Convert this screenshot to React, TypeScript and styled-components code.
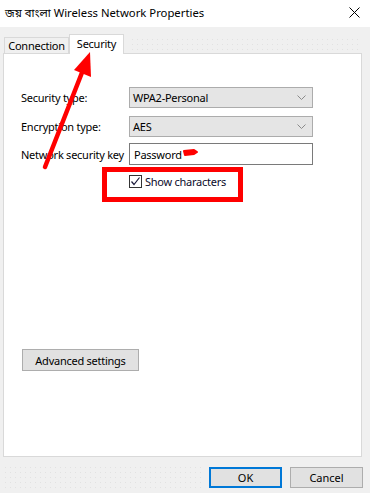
import React from 'react';
import styled, { createGlobalStyle } from 'styled-components';

const Global = createGlobalStyle`
  html, body { margin: 0; padding: 0; background: #f0f0f0; }
  body {
    font-family: "Noto Sans", "Noto Sans Bengali", sans-serif;
    font-size: 11px;
    line-height: 15px;
    color: #000;
  }
`;

const Window = styled.div`
  position: relative;
  width: 370px;
  height: 493px;
  background: #f0f0f0;
  display: flex;
  flex-direction: column;
  overflow: hidden;
`;

const TitleBar = styled.div`
  height: 27px;
  box-sizing: border-box;
  background: #fff;
  display: flex;
  align-items: center;
  justify-content: space-between;
  padding: 0 10px 2px 5px;
`;

const Title = styled.span`
  font-size: 11.3px;
  white-space: nowrap;
`;

const Body = styled.div`
  display: flex;
  flex-direction: column;
  padding: 7px 8px 0 3px;
  letter-spacing: -0.25px;
`;

const TabStrip = styled.div`
  display: flex;
  align-items: flex-end;
  height: 19px;
  padding-left: 1px;
`;

const Tab = styled.div<{ $active?: boolean }>`
  box-sizing: border-box;
  width: ${p => (p.$active ? '55px' : '65px')};
  height: ${p => (p.$active ? '20px' : '16px')};
  margin-bottom: ${p => (p.$active ? '-1px' : '0')};
  padding: ${p => (p.$active ? '1px 0 0' : '0')};
  background: ${p => (p.$active ? '#fff' : '#f0f0f0')};
  border: 1px solid #d9d9d9;
  border-bottom: none;
  position: relative;
  z-index: ${p => (p.$active ? 2 : 1)};
  display: flex;
  justify-content: center;
  align-items: ${p => (p.$active ? 'flex-start' : 'center')};
  white-space: nowrap;
`;

const Dots = styled.div<{ $h: number }>`
  flex: 1;
  height: ${p => p.$h}px;
  background-image: radial-gradient(circle, #e2e2e2 0.6px, transparent 0.8px);
  background-size: 5px 5px;
`;

const TabDots = styled(Dots)`
  margin: 0 0 3px 6px;
  align-self: flex-end;
`;

const Panel = styled.div`
  position: relative;
  z-index: 1;
  box-sizing: border-box;
  height: 404px;
  background: #fff;
  border: 1px solid #d9d9d9;
  padding: 33px 0 0 17px;
  display: flex;
  flex-direction: column;
`;

const Form = styled.div`
  display: grid;
  grid-template-columns: 108px 184px;
  align-items: center;
`;

const Label = styled.div<{ $top: number }>`
  grid-column: 1;
  margin-top: ${p => p.$top}px;
  white-space: nowrap;
`;

const Combo = styled.div<{ $top: number }>`
  grid-column: 2;
  margin-top: ${p => p.$top}px;
  box-sizing: border-box;
  height: 21px;
  background: #e5e5e5;
  border: 1px solid #acacac;
  padding: 0 6px 0 3px;
  display: flex;
  align-items: center;
  justify-content: space-between;
`;

const TextBox = styled.div<{ $top: number }>`
  grid-column: 2;
  margin-top: ${p => p.$top}px;
  box-sizing: border-box;
  height: 22px;
  background: #fff;
  border: 1px solid #7a7a7a;
  padding: 0 4px;
  display: flex;
  align-items: center;
`;

const CheckRow = styled.div`
  grid-column: 2;
  margin-top: 10px;
  height: 13px;
  display: flex;
  align-items: center;
  gap: 3px;
  color: #0a0a2a;
`;

const CheckBox = styled.div`
  box-sizing: border-box;
  width: 13px;
  height: 13px;
  border: 1px solid #333;
  background: #fff;
  display: flex;
  align-items: center;
  justify-content: center;
`;

const Button = styled.div<{ $primary?: boolean }>`
  box-sizing: border-box;
  height: 21px;
  width: 73px;
  background: #e1e1e1;
  border: ${p => (p.$primary ? '2px solid #0078d7' : '1px solid #adadad')};
  display: flex;
  align-items: center;
  justify-content: center;
  white-space: nowrap;
`;

const AdvancedButton = styled(Button)`
  width: 117px;
  height: 22px;
  margin: 161px 0 0 1px;
`;

const Footer = styled.div`
  display: flex;
  align-items: center;
  gap: 8px;
  padding: 8px 7px 0 3px;
`;

const Highlight = styled.div`
  position: absolute;
  left: 102px;
  top: 167px;
  width: 141px;
  height: 35px;
  box-sizing: border-box;
  border: 5px solid #ff0000;
  z-index: 5;
  pointer-events: none;
`;

const Overlay = styled.svg`
  position: absolute;
  left: 0;
  top: 0;
  z-index: 6;
  pointer-events: none;
`;

const Chevron = () => (
  <svg width="9" height="5" viewBox="0 0 9 5">
    <path d="M0.5 0.5 L4.5 4.5 L8.5 0.5" fill="none" stroke="#8a8a8a" strokeWidth="1" />
  </svg>
);

export default function App() {
  return (
    <>
      <Global />
      <Window>
        <TitleBar>
          <Title>জয় বাংলা Wireless Network Properties</Title>
          <svg width="11" height="11" viewBox="0 0 11 11">
            <path d="M0.5 0.5 L10.5 10.5 M10.5 0.5 L0.5 10.5" stroke="#000" strokeWidth="1" />
          </svg>
        </TitleBar>
        <Body>
          <TabStrip>
            <Tab>Connection</Tab>
            <Tab $active>Security</Tab>
            <TabDots $h={13} />
          </TabStrip>
          <Panel>
            <Form>
              <Label $top={0}>Security type:</Label>
              <Combo $top={0}>
                <span>WPA2-Personal</span>
                <Chevron />
              </Combo>
              <Label $top={8}>Encryption type:</Label>
              <Combo $top={8}>
                <span>AES</span>
                <Chevron />
              </Combo>
              <Label $top={6}>Network security key</Label>
              <TextBox $top={6}>Password</TextBox>
              <CheckRow>
                <CheckBox>
                  <svg width="11" height="11" viewBox="0 0 11 11">
                    <path d="M1.5 5.5 L4 8.5 L9.5 1.5" fill="none" stroke="#1a1a3a" strokeWidth="1.2" />
                  </svg>
                </CheckBox>
                <span>Show characters</span>
              </CheckRow>
            </Form>
            <AdvancedButton>Advanced settings</AdvancedButton>
          </Panel>
        </Body>
        <Footer>
          <Dots $h={24} />
          <Button $primary>OK</Button>
          <Button>Cancel</Button>
        </Footer>
        <Highlight />
        <Overlay width="370" height="493" viewBox="0 0 370 493">
          <line x1="45" y1="167" x2="83" y2="70" stroke="#ff0000" strokeWidth="4.5" strokeLinecap="round" />
          <polygon points="90,52 74,70 91,77" fill="#ff0000" />
          <path d="M184 151 L194 150 L197 152 L194 154 L185 155 Z" fill="#ff0000" stroke="#ff0000" strokeWidth="2" strokeLinejoin="round" />
        </Overlay>
      </Window>
    </>
  );
}
